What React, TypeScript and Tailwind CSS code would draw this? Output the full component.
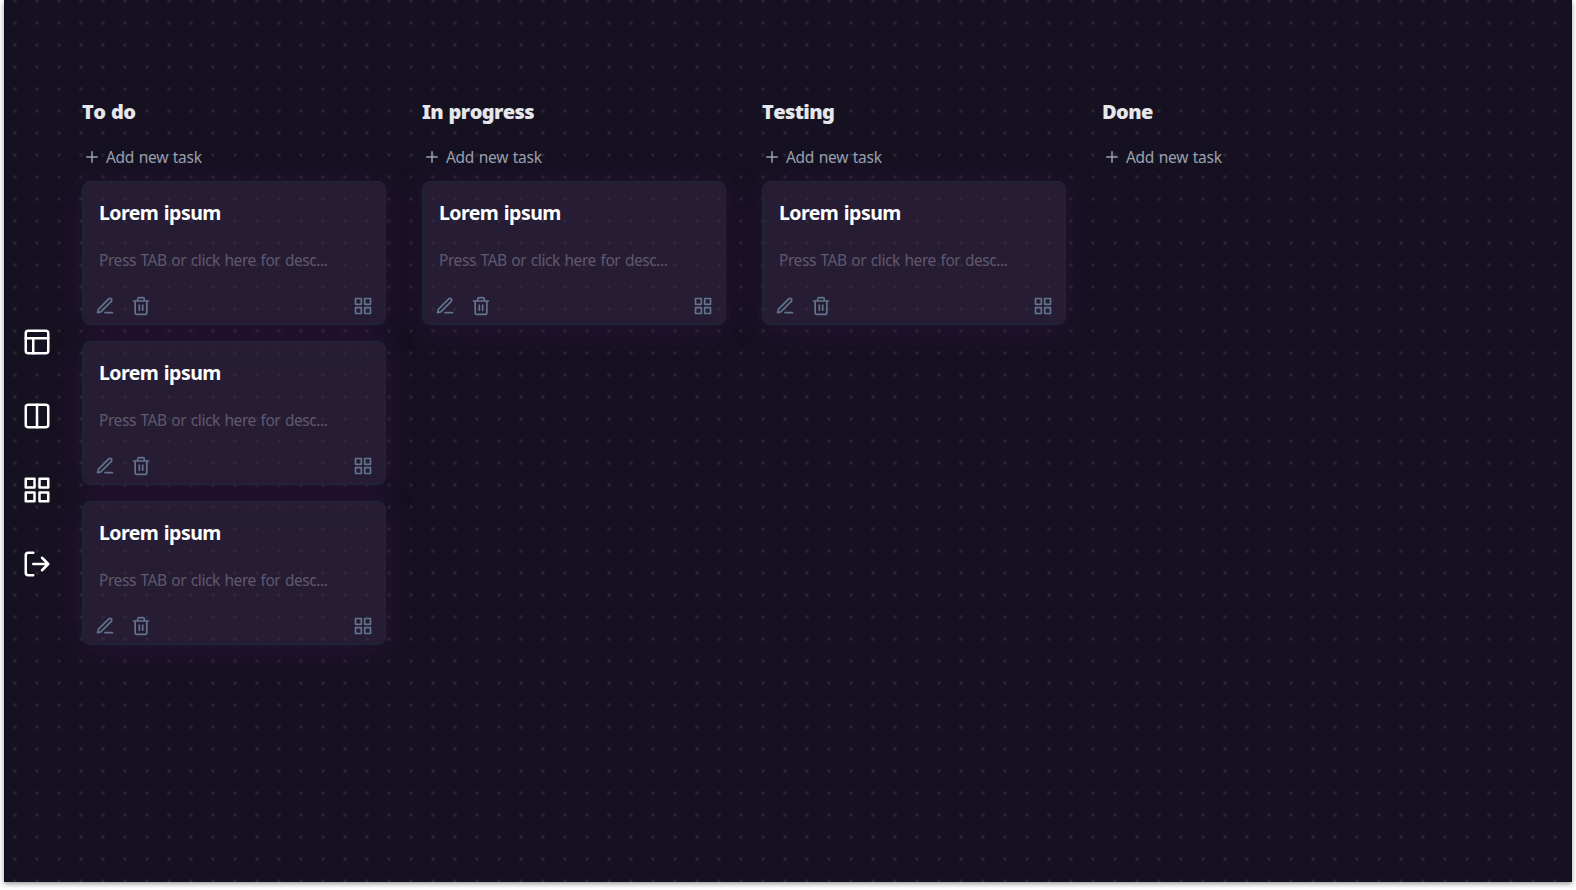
import type { ReactNode } from "react";

const columns = [
  { title: "To do", tasks: 3 },
  { title: "In progress", tasks: 1 },
  { title: "Testing", tasks: 1 },
  { title: "Done", tasks: 0 },
];

function Icon({ className, stroke = 2, children }: { className: string; stroke?: number; children: ReactNode }) {
  return (
    <svg viewBox="0 0 24 24" fill="none" stroke="currentColor" strokeWidth={stroke} strokeLinecap="round" strokeLinejoin="round" className={className}>
      {children}
    </svg>
  );
}

function GridShapes() {
  return (
    <>
      <rect x="3" y="3" width="7" height="7" />
      <rect x="14" y="3" width="7" height="7" />
      <rect x="14" y="14" width="7" height="7" />
      <rect x="3" y="14" width="7" height="7" />
    </>
  );
}

function Sidebar() {
  return (
    <nav className="flex w-[66px] shrink-0 flex-col items-center gap-11 pt-[327px] text-white">
      <Icon className="size-[30px]">
        <rect x="3" y="3" width="18" height="18" rx="2" />
        <path d="M3 9h18M9 21V9" />
      </Icon>
      <Icon className="size-[30px]">
        <rect x="3" y="3" width="18" height="18" rx="2" />
        <path d="M12 3v18" />
      </Icon>
      <Icon className="size-[30px]">
        <GridShapes />
      </Icon>
      <Icon className="size-[30px]">
        <path d="M9 21H5a2 2 0 0 1-2-2V5a2 2 0 0 1 2-2h4M16 17l5-5-5-5M21 12H9" />
      </Icon>
    </nav>
  );
}

function TaskCard() {
  return (
    <article className="flex h-36 flex-col rounded-lg border border-[#1c2839] bg-[#362a48]/50 pt-[17px] shadow-[0_4px_32px_rgba(90,22,115,0.27)]">
      <h3 className="px-4 text-[19.5px] leading-7 font-bold tracking-[-0.55px] text-white [word-spacing:1px]">Lorem ipsum</h3>
      <p className="mt-[21px] px-4 text-[15.5px] leading-6 tracking-[-0.43px] text-[#60586c] [word-spacing:1px]">Press TAB or click here for desc...</p>
      <div className="mt-6 flex items-center px-3 text-slate-500">
        <Icon className="size-5">
          <path d="M12 20h9M16.5 3.5a2.121 2.121 0 0 1 3 3L7 19l-4 1 1-4L16.5 3.5z" />
        </Icon>
        <Icon className="ml-4 size-5">
          <path d="M3 6h18M19 6v14a2 2 0 0 1-2 2H7a2 2 0 0 1-2-2V6m3 0V4a2 2 0 0 1 2-2h4a2 2 0 0 1 2 2v2M10 11v6M14 11v6" />
        </Icon>
        <Icon className="ml-auto size-5">
          <GridShapes />
        </Icon>
      </div>
    </article>
  );
}

function Column({ title, tasks }: { title: string; tasks: number }) {
  return (
    <section className="w-[304px] shrink-0">
      <h2 className="text-xl leading-7 font-black tracking-[-0.6px] text-gray-200 [font-kerning:none] [word-spacing:1px]">{title}</h2>
      <button className="mt-[19px] flex h-6 items-center pl-px text-[15.5px] tracking-[-0.3px] text-gray-400 [word-spacing:1px]">
        <Icon className="mr-[5px] size-[18px]">
          <path d="M12 5v14M5 12h14" />
        </Icon>
        <span className="pt-0.5">Add new task</span>
      </button>
      <div className="mt-3 flex flex-col gap-4">
        {Array.from({ length: tasks }, (_, i) => (
          <TaskCard key={i} />
        ))}
      </div>
    </section>
  );
}

export default function App() {
  return (
    <div className="h-[890px] overflow-hidden bg-white px-1 font-['Noto_Sans','Open_Sans',sans-serif]">
      <main className="flex h-[882px] bg-[#161121] bg-[radial-gradient(circle,#29242f_1px,transparent_2.5px)] bg-[size:22px_22px] bg-[position:0_-10px] shadow-[0_2px_5px_rgba(0,0,0,0.4)]">
        <Sidebar />
        <div className="ml-3 flex gap-9 pt-[98px]">
          {columns.map((c) => (
            <Column key={c.title} {...c} />
          ))}
        </div>
      </main>
    </div>
  );
}
